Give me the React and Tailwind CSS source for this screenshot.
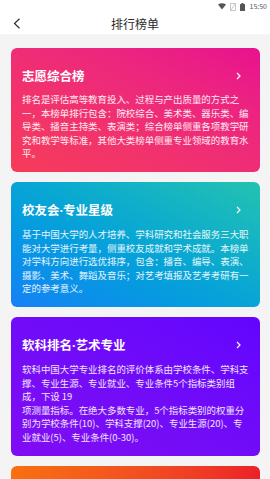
import React from 'react';

const Dot = () => <span style={{ fontFamily: '"Noto Sans", sans-serif' }}>·</span>;

const cards = [
  {
    title: '志愿综合榜',
    bg: 'bg-gradient-to-tr from-[#f63c58] to-[#e8108e]',
    body: '排名是评估高等教育投入、过程与产出质量的方式之一，本榜单排行包含：院校综合、美术类、器乐类、编导类、播音主持类、表演类；综合榜单侧重各项教学研究和教学等标准，其他大类榜单侧重专业领域的教育水平。',
  },
  {
    title: (
      <>
        校友会<Dot />专业星级
      </>
    ),
    bg: 'bg-gradient-to-tr from-[#1681f6] to-[#24c2b0]',
    body: '基于中国大学的人才培养、学科研究和社会服务三大职能对大学进行考量，侧重校友成就和学术成就。本榜单对学科方向进行选优排序，包含：播音、编导、表演、摄影、美术、舞蹈及音乐；对艺考填报及艺考考研有一定的参考意义。',
  },
  {
    title: (
      <>
        软科排名<Dot />艺术专业
      </>
    ),
    bg: 'bg-gradient-to-tr from-[#800cf2] to-[#6204fe]',
    body: (
      <>
        软科中国大学专业排名的评价体系由学校条件、学科支撑、专业生源、专业就业、专业条件5个指标类别组成，下设 19
        <br />
        项测量指标。在绝大多数专业，5个指标类别的权重分别为学校条件(10)、学科支撑(20)、专业生源(20)、专业就业(5)、专业条件(0-30)。
      </>
    ),
  },
  {
    title: '',
    bg: 'bg-gradient-to-r from-[#f8700f] to-[#ec2028]',
    body: '',
  },
];

const StatusBar = () => (
  <div className="h-[13px] flex items-center justify-end pr-[3px] gap-[4px] bg-white">
    <svg width="8" height="7" viewBox="0 0 8 7">
      <path d="M0 1.5 Q4 -1 8 1.5 L4 6.5 Z" fill="#555" />
    </svg>
    <svg width="6" height="8" viewBox="0 0 6 8">
      <rect x="0.5" y="0.5" width="5" height="7" fill="none" stroke="#bbb" strokeWidth="0.8" />
      <path d="M1 7 L5 1" stroke="#bbb" strokeWidth="0.8" />
    </svg>
    <svg width="5" height="8" viewBox="0 0 5 8">
      <rect x="1.5" y="0" width="2" height="1" fill="#555" />
      <rect x="0" y="1" width="5" height="7" rx="0.5" fill="#555" />
    </svg>
    <span className="text-[7px] text-[#555] leading-none ml-[1px]">15:50</span>
  </div>
);

const Header = () => (
  <div className="h-[21px] bg-white flex items-center relative">
    <svg className="ml-[13px]" width="8" height="11" viewBox="0 0 8 11">
      <polyline points="6.5,0.8 1.5,5.5 6.5,10.2" fill="none" stroke="#333" strokeWidth="1.2" />
    </svg>
    <div className="absolute inset-0 flex items-center justify-center text-[12px] text-[#2a2a2a]">
      排行榜单
    </div>
  </div>
);

const Card = ({ title, body, bg }) => (
  <div className={`${bg} rounded-[6px] pl-[11px] pr-[10px] pt-[19px] pb-[11px] min-h-[40px]`}>
    {title && (
      <>
        <div className="flex items-center justify-between">
          <span className="text-[12.5px] leading-[17px] font-bold text-white">{title}</span>
          <svg className="mr-[9px]" width="5" height="8" viewBox="0 0 5 8">
            <polyline points="1,1 4,4 1,7" fill="none" stroke="white" strokeWidth="1.2" />
          </svg>
        </div>
        <p className="mt-[9px] text-[9.45px] leading-[13.6px] text-white/90">{body}</p>
      </>
    )}
  </div>
);

export default function App() {
  return (
    <div
      className="w-[270px] h-[479px] overflow-hidden bg-[#f4f4f4]"
      style={{ fontFamily: '"Noto Sans CJK SC", "Noto Sans", sans-serif' }}
    >
      <StatusBar />
      <Header />
      <div className="pt-[14px] pl-[11px] pr-[10px] flex flex-col gap-[10px]">
        {cards.map((c, i) => (
          <Card key={i} {...c} />
        ))}
      </div>
    </div>
  );
}
